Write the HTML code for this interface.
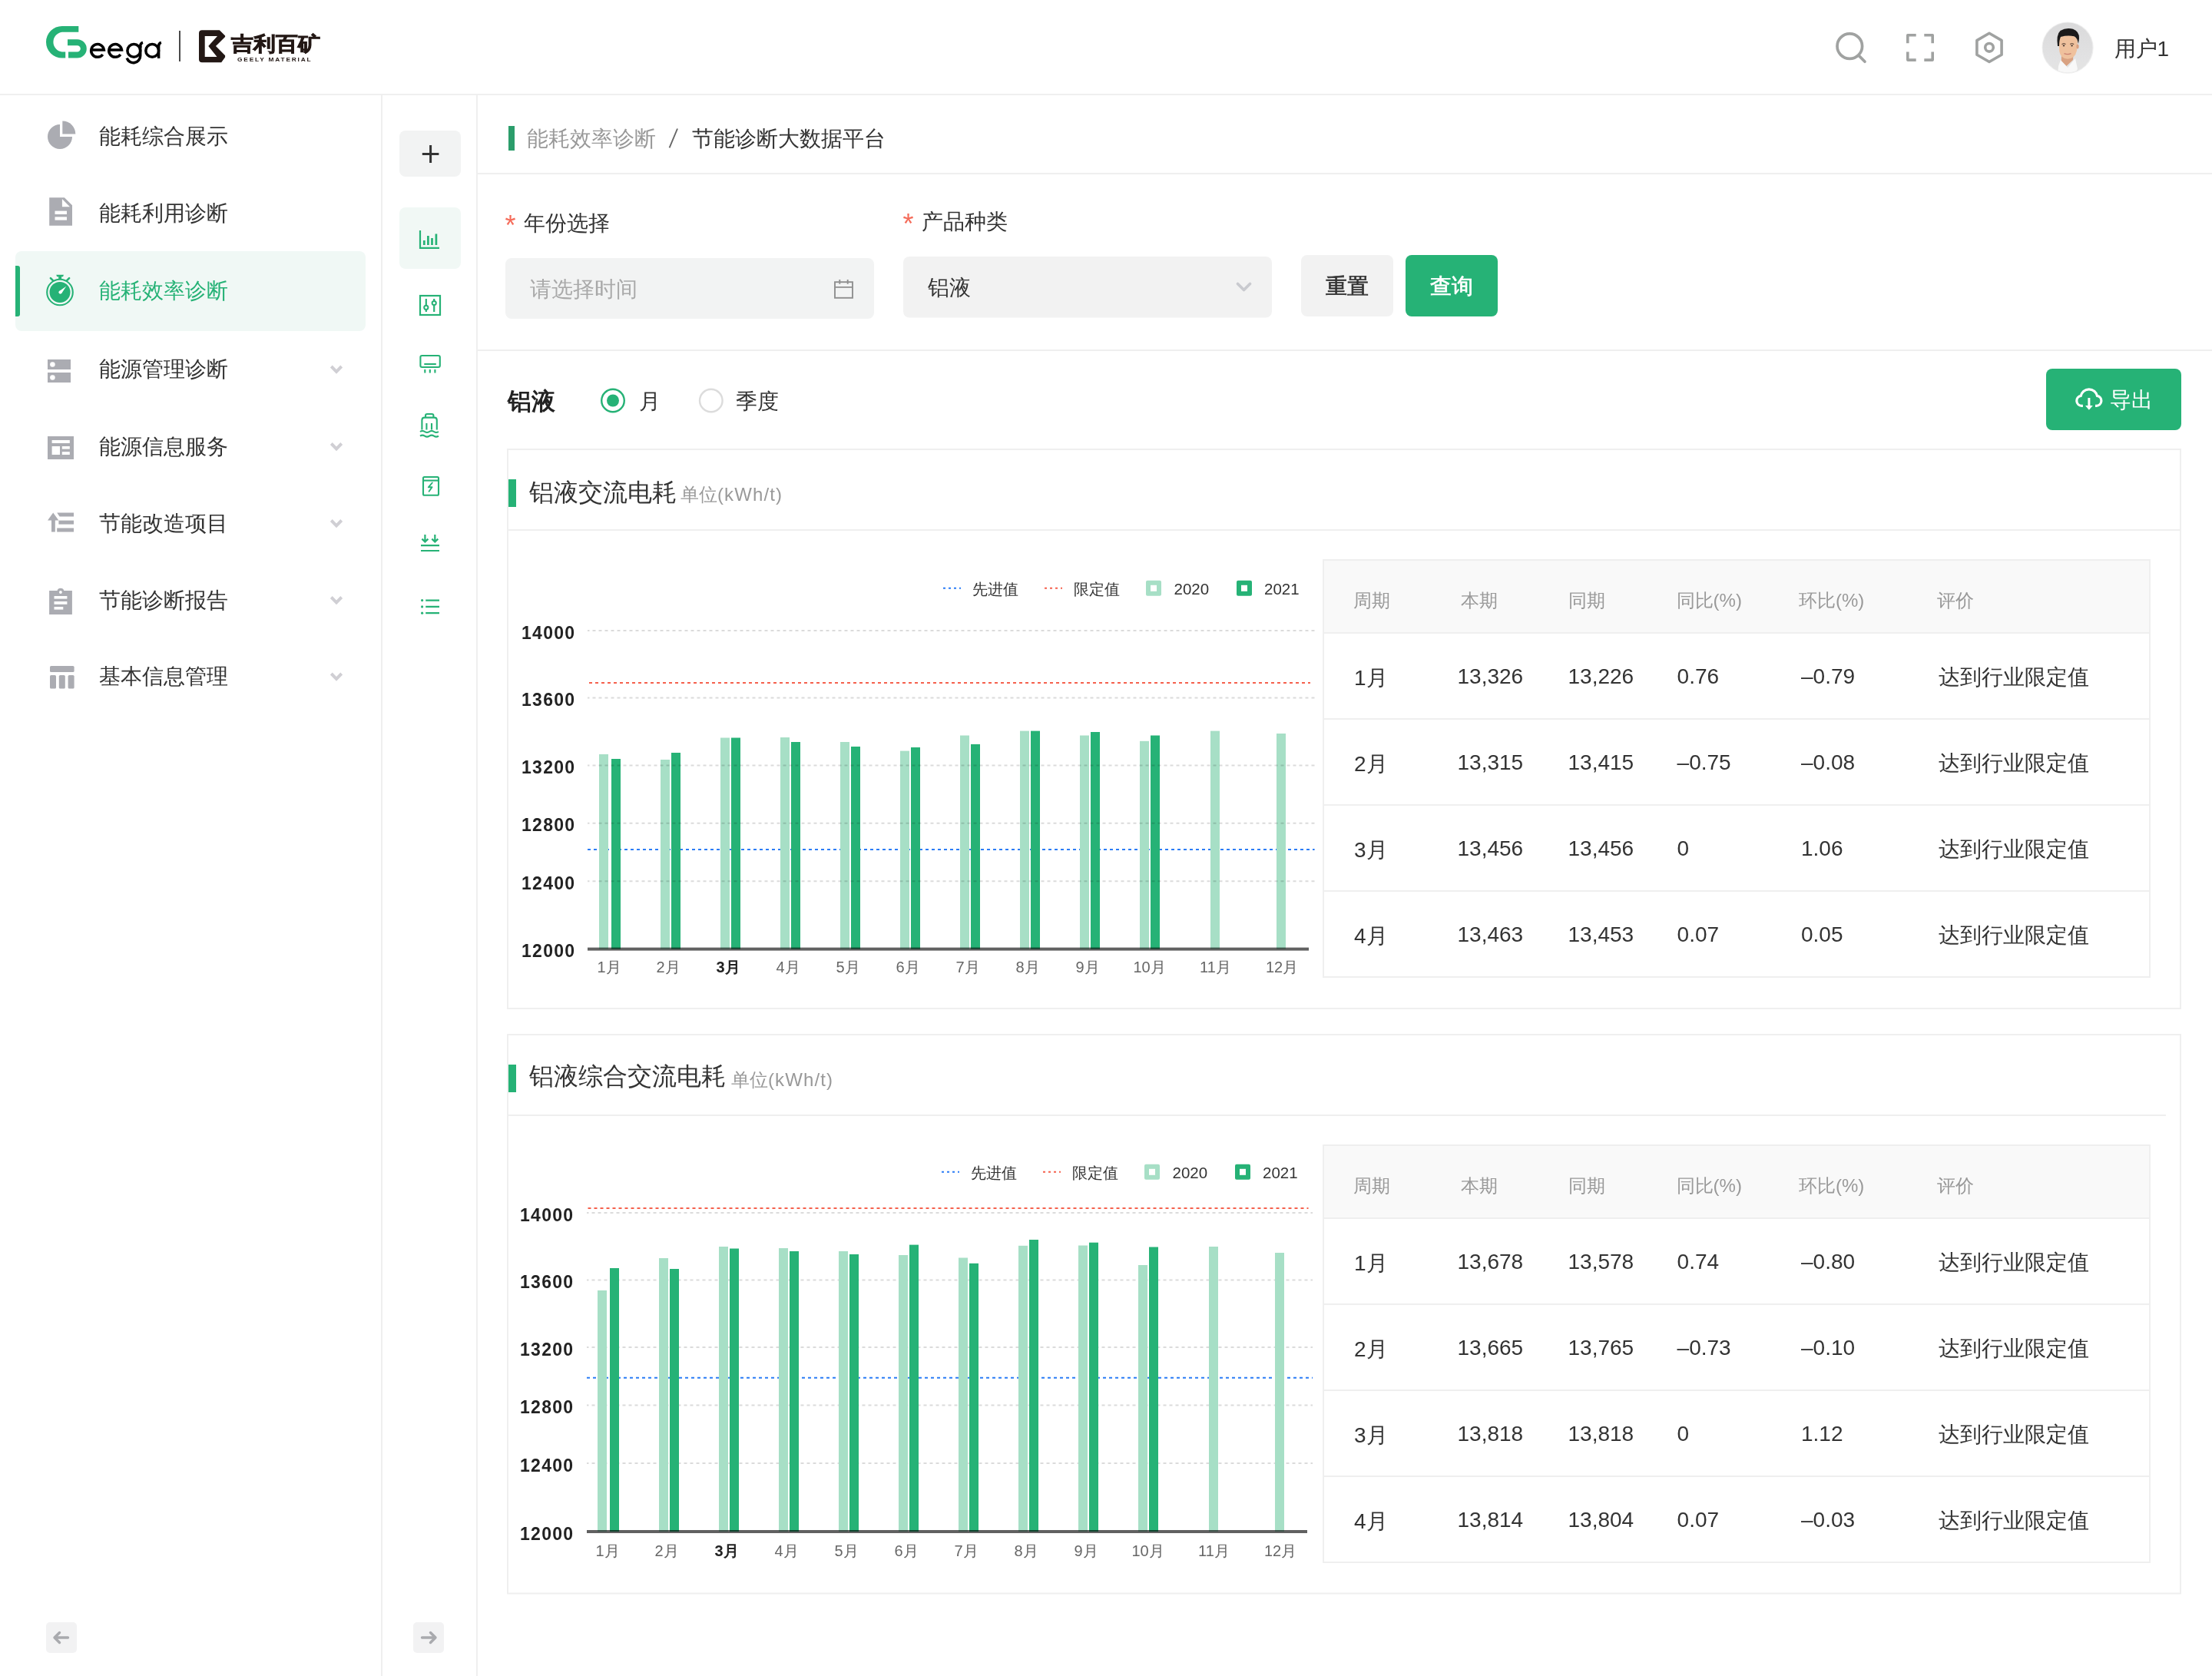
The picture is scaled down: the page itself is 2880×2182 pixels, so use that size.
<!DOCTYPE html>
<html><head><meta charset="utf-8"><title>节能诊断大数据平台</title>
<style>
html,body{margin:0;padding:0;background:#fff;}
body{width:2880px;height:2182px;position:relative;overflow:hidden;font-family:"Liberation Sans",sans-serif;}
svg.g{position:absolute;left:0;top:0;}
.t{position:absolute;white-space:nowrap;line-height:1;}
#tx{position:absolute;left:0;top:0;width:2880px;height:2182px;will-change:transform;}
</style></head><body>
<svg class="g" width="2880" height="2182" viewBox="0 0 2880 2182">
<rect x="0" y="122" width="2880" height="2" rx="0" fill="#efefef" />
<path d="M79,34 H102.3 V41.8 H80.8 A13,13 0 0 0 80.8,67.6 H85.2 V75.6 H80.8 A20.8,20.8 0 0 1 80.8,34 Z" fill="#26b276" stroke="none" stroke-width="0" />
<path d="M88,51.2 H100.6 A12.2,12.2 0 0 1 100.6,75.6 H89 V67.6 H100.6 A4.2,4.2 0 0 0 100.6,59.2 H88 Z" fill="#26b276" stroke="none" stroke-width="0" />
<g fill="none" stroke="#000" stroke-width="3.5"><path d="M118.8,64.9 H135.4 A8.4,8.4 0 1 0 133.8,71"/><path d="M141.9,64.9 H158.5 A8.4,8.4 0 1 0 156.9,71"/><circle cx="174.3" cy="65.9" r="8.4"/><path d="M182.7,60 V72.5 A9,9 0 0 1 165.2,75.6"/><path d="M182.7,62 V60 Q182.7,56.3 186,55.4"/><circle cx="198.2" cy="65.9" r="8.4"/><path d="M206.6,76 V60 Q206.6,56.3 209.9,55.4"/></g>
<rect x="233" y="40" width="2" height="40" rx="0" fill="#4a4a4a" />
<path d="M263,39.2 H285.8 L293.1,46.5 V48 L281,60.1 L293.1,72.3 V74.5 L288.2,81.3 H263 Q259,81.3 259,77.3 V43.2 Q259,39.2 263,39.2 Z M266.7,47.1 V74 H282.5 L271.3,60.1 L283,47.1 Z" fill="#231815" stroke="none" stroke-width="0" fill-rule="evenodd"/>
<g fill="none" stroke="#a0a2a1" stroke-width="3.7" stroke-linecap="round"><circle cx="2408.3" cy="60.1" r="16.3"/><path d="M2420.4,72.6 L2428,80.2"/></g>
<g fill="none" stroke="#a0a2a1" stroke-width="3.6" stroke-linejoin="round"><path d="M2494.7,45.7 H2483.8 V56.3"/><path d="M2505.3,45.7 H2516.2 V56.3"/><path d="M2483.8,67.6 V78.1 H2494.7"/><path d="M2516.2,67.6 V78.1 H2505.3"/></g>
<g fill="none" stroke="#a0a2a1" stroke-width="3.6" stroke-linejoin="round"><path d="M2590,43.3 L2606.1,52.6 V71.2 L2590,80.5 L2573.9,71.2 V52.6 Z"/><circle cx="2590" cy="61.8" r="5.3"/></g>
<defs><clipPath id="av"><circle cx="2692" cy="62" r="32.5"/></clipPath><linearGradient id="avg" x1="0" y1="0" x2="0" y2="1"><stop offset="0" stop-color="#d9d9da"/><stop offset="1" stop-color="#e6e6e7"/></linearGradient></defs>
<circle cx="2692.1" cy="62.1" r="33.6" fill="#eeeeee"/>
<g clip-path="url(#av)"><rect x="2655" y="25" width="75" height="75" fill="url(#avg)"/><path d="M2668,100 L2672,85 Q2679,80 2684,79 L2703,78 Q2714,81 2716,84 L2721,100 Z" fill="#e3e3e3"/><path d="M2679,100 L2680,86 L2683,78 L2692,88 L2702,76 L2705,90 L2698,100 Z" fill="#f8f8f8"/><path d="M2684,70 L2683.8,79 L2690.5,86 L2699,78 L2699.5,69 Z" fill="#d9a282"/><path d="M2680.5,53 Q2680.5,46 2692.5,46 Q2705,46 2704.8,54 L2704,66 Q2701.5,76.5 2692,76.8 Q2683,76.5 2681.3,67 Z" fill="#efc19d"/><ellipse cx="2705" cy="60.5" rx="1.6" ry="3" fill="#d9a080"/><path d="M2679,60 Q2677,45 2682.5,40 Q2690,35.5 2699,37.8 Q2707.5,41 2707,50 L2706,57 Q2704.5,49 2700.5,47.3 Q2692,45.5 2683,48 Q2681,52 2681,60 Z" fill="#1b1a1a"/><path d="M2684.5,57.5 Q2687,56.2 2689.5,57.4 M2695.2,57.4 Q2697.7,56.2 2700.2,57.5" stroke="#3a2a22" stroke-width="1" fill="none"/><ellipse cx="2687" cy="59.6" rx="1.3" ry="0.8" fill="#2a2020"/><ellipse cx="2697.6" cy="59.6" rx="1.3" ry="0.8" fill="#2a2020"/><path d="M2687.5,69.6 Q2692,71.6 2696.5,69.6" stroke="#c98070" stroke-width="1.2" fill="none"/></g>
<rect x="496" y="124" width="2" height="2058" rx="0" fill="#efefef" />
<rect x="620" y="124" width="2" height="2058" rx="0" fill="#efefef" />
<rect x="20" y="327" width="456" height="104" rx="8" fill="#f0f8f5" />
<path d="M20,346 H23 Q26,346 26,349 V409 Q26,412 23,412 H20 Z" fill="#26b276" stroke="none" stroke-width="0" />
<path d="M431.3,477 L438,483.8 L444.7,477" fill="none" stroke="#d0cfd4" stroke-width="4" stroke-linejoin="miter"/>
<path d="M431.3,577.5 L438,584.3 L444.7,577.5" fill="none" stroke="#d0cfd4" stroke-width="4" stroke-linejoin="miter"/>
<path d="M431.3,677.5 L438,684.3 L444.7,677.5" fill="none" stroke="#d0cfd4" stroke-width="4" stroke-linejoin="miter"/>
<path d="M431.3,777.5 L438,784.3 L444.7,777.5" fill="none" stroke="#d0cfd4" stroke-width="4" stroke-linejoin="miter"/>
<path d="M431.3,877 L438,883.8 L444.7,877" fill="none" stroke="#d0cfd4" stroke-width="4" stroke-linejoin="miter"/>
<path d="M78,178 V162 A16,16 0 1 0 94,178 Z" fill="#abacb2" stroke="none" stroke-width="0" />
<path d="M81.3,174.5 V157.5 A17,17 0 0 1 98.3,174.5 Z" fill="#abacb2" stroke="none" stroke-width="0" />
<path d="M64.2,257.2 H83.9 L94,267.3 V293.7 H64.2 Z M80.9,259 V269.3 H91 Z" fill="#abacb2" stroke="none" stroke-width="0" fill-rule="evenodd"/>
<rect x="71.5" y="274.6" width="15.5" height="4.4" rx="0" fill="#fff" />
<rect x="71.5" y="282.4" width="15.5" height="4.2" rx="0" fill="#fff" />
<g><circle cx="78" cy="380.5" r="16.8" fill="none" stroke="#26b276" stroke-width="2.1"/><circle cx="78" cy="380.4" r="13.5" fill="#26b276"/><path d="M73.2,357.8 H83 L82,360.2 H74.2 Z" fill="#26b276"/><rect x="76.2" y="359.5" width="3.9" height="4.5" fill="#26b276"/><path d="M65.9,362.2 L68.9,365.2 M90.1,362.2 L87.1,365.2" stroke="#26b276" stroke-width="2.6" stroke-linecap="round"/><path d="M76.9,379.2 L86.2,372.7 L80.1,382 Z" fill="#fff"/><circle cx="78.5" cy="380.6" r="2.1" fill="#fff"/></g>
<rect x="62" y="468" width="30" height="13" rx="0" fill="#abacb2" />
<rect x="62" y="485" width="30" height="13" rx="0" fill="#abacb2" />
<circle cx="68.4" cy="474.5" r="3.3" fill="#fff"/><circle cx="68.4" cy="491.5" r="3.3" fill="#fff"/>
<rect x="62" y="568" width="34" height="30" rx="0" fill="#abacb2" />
<rect x="67.6" y="573" width="23.2" height="4" rx="0" fill="#fff" />
<rect x="67.6" y="581" width="10.4" height="11" rx="0" fill="#fff" />
<rect x="80.8" y="581" width="10" height="3.6" rx="0" fill="#fff" />
<rect x="80.8" y="588.2" width="10" height="3.8" rx="0" fill="#fff" />
<path d="M62,677.6 L69.2,667.5 L76.4,677.6 H71.8 V692.5 H67 V677.6 Z" fill="#abacb2" stroke="none" stroke-width="0" />
<path d="M74.2,667.5 H96 V672.6 H77.6 Z" fill="#abacb2" stroke="none" stroke-width="0" />
<rect x="76.4" y="677.6" width="19.6" height="5" rx="0" fill="#abacb2" />
<rect x="74.2" y="687.5" width="21.8" height="5" rx="0" fill="#abacb2" />
<path d="M64.1,769 H74.5 A4.6,4.6 0 0 1 83.3,769 H93.9 V800 H64.1 Z" fill="#abacb2" stroke="none" stroke-width="0" />
<circle cx="78.9" cy="771" r="1.9" fill="#fff"/>
<rect x="70.5" y="776" width="16.9" height="3.6" rx="0" fill="#fff" />
<rect x="70.5" y="783" width="16.9" height="3.8" rx="0" fill="#fff" />
<rect x="70.5" y="790" width="11.8" height="3.6" rx="0" fill="#fff" />
<rect x="65" y="867" width="31.6" height="8" rx="1.6" fill="#abacb2" />
<rect x="65" y="879" width="8" height="17.6" rx="1.6" fill="#abacb2" />
<rect x="76.8" y="879" width="8" height="17.6" rx="1.6" fill="#abacb2" />
<rect x="88.6" y="879" width="8" height="17.6" rx="1.6" fill="#abacb2" />
<rect x="60" y="2112" width="40" height="40" rx="5" fill="#f2f2f3" />
<path d="M88.5,2132 H71 M77.5,2125.5 L71,2132 L77.5,2138.5" fill="none" stroke="#a9aaae" stroke-width="3.4" stroke-linecap="round" stroke-linejoin="round"/>
<rect x="538" y="2112" width="40" height="40" rx="5" fill="#f2f2f3" />
<path d="M549.5,2132 H567 M560.5,2125.5 L567,2132 L560.5,2138.5" fill="none" stroke="#a9aaae" stroke-width="3.4" stroke-linecap="round" stroke-linejoin="round"/>
<rect x="520" y="170" width="80" height="60" rx="8" fill="#f2f3f3" />
<path d="M549.8,200.5 H571.4 M560.6,189 V212" fill="none" stroke="#333" stroke-width="3" />
<rect x="520" y="270" width="80" height="80" rx="8" fill="#f1f8f5" />
<g fill="none" stroke="#26b276" stroke-width="2.2"><path d="M547,300 V322.8 H572"/><path d="M552.3,319 V313 M557.4,319 V307.1 M562.5,319 V310 M567.9,319 V304.6" stroke-width="2.7"/><rect x="547" y="385" width="26" height="25"/><path d="M554.8,389 V406 M565.2,389 V406"/></g>
<circle cx="554.8" cy="400.3" r="2.6" fill="#fff" stroke="#26b276" stroke-width="2"/><circle cx="565.2" cy="394.5" r="2.6" fill="#fff" stroke="#26b276" stroke-width="2"/>
<g fill="none" stroke="#26b276" stroke-width="2.1" stroke-linecap="butt"><rect x="547.4" y="463" width="25.4" height="15" rx="2"/><path d="M552.3,474 H567.8"/><path d="M553.3,481 V485.5 M559.8,481 V485.5 M566.4,481 V485.5"/><path d="M549.4,559.5 V547 Q549.4,543.6 552.8,543.6 H565.4 Q568.8,543.6 568.8,547 V559.5"/><path d="M554,543.6 V541.2 Q554,539 556.2,539 H562.2 Q564.4,539 564.4,541.2 V543.6"/><path d="M555.4,551 V559.5 M562,551 V559.5"/><path d="M547,562 Q550,560 553,562 T559,562 T565,562 T571,562"/><path d="M547,567.6 Q550,565.6 553,567.6 T559,567.6 T565,567.6 T571,567.6"/><rect x="551" y="621" width="20" height="23.8" rx="1.5"/><path d="M551,625.6 H571"/></g>
<path d="M562.8,628.5 L557.8,634.3 H562.5 L558.6,639.7" fill="none" stroke="#26b276" stroke-width="1.9" stroke-linejoin="round" stroke-linecap="round"/>
<g fill="none" stroke="#26b276" stroke-width="2.2"><path d="M548,710.2 H572 M548,717 H572"/><path d="M553.4,696 V705 M549.4,701.6 L553.4,705.4 L557.4,701.6 M566.3,696 V705 M562.3,701.6 L566.3,705.4 L570.3,701.6"/><path d="M554.2,781.6 H572 M554.2,789.9 H572 M554.2,798.2 H572"/></g>
<circle cx="549.6" cy="781.6" r="1.6" fill="#26b276"/><circle cx="549.6" cy="789.9" r="1.6" fill="#26b276"/><circle cx="549.6" cy="798.2" r="1.6" fill="#26b276"/>
<rect x="622" y="225" width="2258" height="2" rx="0" fill="#efefef" />
<rect x="662" y="164" width="8" height="32" rx="0" fill="#2b9d6b" />
<path d="M882,167.5 L871.6,192.3" fill="none" stroke="#666" stroke-width="1.9" />
<rect x="658" y="336" width="480" height="79" rx="8" fill="#f2f3f3" />
<g fill="none" stroke="#8f8f8f" stroke-width="1.9"><rect x="1087" y="367.2" width="23" height="20.6"/><path d="M1087,373.9 H1110 M1093.3,364 V369.7 M1103.7,364 V369.7"/></g>
<rect x="1176" y="334" width="480" height="79.5" rx="8" fill="#f2f2f2" />
<path d="M1611.5,369.5 L1619.5,377.5 L1627.5,369.5" fill="none" stroke="#c9cacf" stroke-width="3.8" stroke-linecap="round" stroke-linejoin="round"/>
<rect x="1694" y="332" width="120" height="80" rx="8" fill="#f2f2f2" />
<rect x="1830" y="332" width="120" height="80" rx="8" fill="#26b276" />
<rect x="622" y="455" width="2258" height="2" rx="0" fill="#efefef" />
<circle cx="798" cy="521.5" r="14.8" fill="#fff" stroke="#26b276" stroke-width="2.4"/><circle cx="798" cy="521.5" r="8" fill="#26b276"/>
<circle cx="925.8" cy="521.5" r="14.8" fill="#fff" stroke="#dcdcdc" stroke-width="2.4"/>
<rect x="2664" y="480" width="176" height="80" rx="8" fill="#26b276" />
<path d="M2711.9,528.3 H2710.3 A6.5,6.5 0 0 1 2709.2,515.4 A10.9,10.9 0 0 1 2730.5,515.4 A6.5,6.5 0 0 1 2729.4,528.3 H2728" fill="none" stroke="#fff" stroke-width="3.2" />
<path d="M2719.9,518 V528.5" fill="none" stroke="#fff" stroke-width="3" />
<path d="M2715,528 H2724.8 L2719.9,533.8 Z" fill="#fff" stroke="none" stroke-width="0" />
<rect x="661" y="585" width="2178" height="728" fill="none" stroke="#efefef" stroke-width="2"/>
<rect x="662" y="689" width="2177" height="2" rx="0" fill="#efefef" />
<rect x="662" y="624" width="10" height="36" rx="0" fill="#26b276" />
<rect x="661" y="1347" width="2178" height="727.5" fill="none" stroke="#efefef" stroke-width="2"/>
<rect x="662" y="1451" width="2158" height="2" rx="0" fill="#efefef" />
<rect x="662" y="1386" width="10" height="36" rx="0" fill="#26b276" />
<path d="M765,1106 H1711.6" stroke="#2b7cf6" stroke-width="2" stroke-dasharray="4 4"/>
<rect x="780" y="982" width="12" height="253.6" rx="0" fill="#a7dfc6" />
<rect x="860" y="989" width="12" height="246.6" rx="0" fill="#a7dfc6" />
<rect x="938" y="960.5" width="12" height="275.1" rx="0" fill="#a7dfc6" />
<rect x="1016" y="960" width="12" height="275.6" rx="0" fill="#a7dfc6" />
<rect x="1094" y="966" width="12" height="269.6" rx="0" fill="#a7dfc6" />
<rect x="1172" y="977.6" width="12" height="258.0" rx="0" fill="#a7dfc6" />
<rect x="1250" y="957.5" width="12" height="278.1" rx="0" fill="#a7dfc6" />
<rect x="1328" y="951.6" width="12" height="284.0" rx="0" fill="#a7dfc6" />
<rect x="1406" y="957.5" width="12" height="278.1" rx="0" fill="#a7dfc6" />
<rect x="1484" y="964.8" width="12" height="270.8" rx="0" fill="#a7dfc6" />
<rect x="1576" y="951.6" width="12" height="284.0" rx="0" fill="#a7dfc6" />
<rect x="1662" y="955" width="12" height="280.6" rx="0" fill="#a7dfc6" />
<rect x="796" y="988" width="12" height="247.6" rx="0" fill="#26b276" />
<rect x="874" y="980" width="12" height="255.6" rx="0" fill="#26b276" />
<rect x="952" y="960.5" width="12" height="275.1" rx="0" fill="#26b276" />
<rect x="1030" y="966" width="12" height="269.6" rx="0" fill="#26b276" />
<rect x="1108" y="972" width="12" height="263.6" rx="0" fill="#26b276" />
<rect x="1186" y="973" width="12" height="262.6" rx="0" fill="#26b276" />
<rect x="1264" y="968.9" width="12" height="266.7" rx="0" fill="#26b276" />
<rect x="1342" y="951.6" width="12" height="284.0" rx="0" fill="#26b276" />
<rect x="1420" y="953" width="12" height="282.6" rx="0" fill="#26b276" />
<rect x="1498" y="957.5" width="12" height="278.1" rx="0" fill="#26b276" />
<path d="M765,821 H1711.6" stroke="rgba(0,0,0,0.14)" stroke-width="2" stroke-dasharray="4 4" stroke-dashoffset="1.5"/>
<path d="M765,908.5 H1711.6" stroke="rgba(0,0,0,0.14)" stroke-width="2" stroke-dasharray="4 4" stroke-dashoffset="1.5"/>
<path d="M765,996.4 H1711.6" stroke="rgba(0,0,0,0.14)" stroke-width="2" stroke-dasharray="4 4" stroke-dashoffset="1.5"/>
<path d="M765,1071.8 H1711.6" stroke="rgba(0,0,0,0.14)" stroke-width="2" stroke-dasharray="4 4" stroke-dashoffset="1.5"/>
<path d="M765,1147.2 H1711.6" stroke="rgba(0,0,0,0.14)" stroke-width="2" stroke-dasharray="4 4" stroke-dashoffset="1.5"/>
<path d="M767,889 H1706" stroke="#f5614d" stroke-width="2" stroke-dasharray="4 4"/>
<rect x="765" y="1233.6" width="939" height="4" fill="rgba(0,0,0,0.62)"/>
<path d="M1228,765.8 H1251" stroke="#2b7cf6" stroke-width="2" stroke-dasharray="3 4"/>
<path d="M1360,765.8 H1383" stroke="#f5614d" stroke-width="2" stroke-dasharray="3 4"/>
<rect x="1492" y="755.8" width="20" height="20" rx="2" fill="#a7dfc6" />
<rect x="1498" y="761.8" width="8" height="8" rx="0" fill="#fff" />
<rect x="1610" y="755.8" width="20" height="20" rx="2" fill="#26b276" />
<rect x="1616" y="761.8" width="8" height="8" rx="0" fill="#fff" />
<path d="M764,1579 H1709" stroke="rgba(0,0,0,0.14)" stroke-width="2" stroke-dasharray="4 4" stroke-dashoffset="1.5"/>
<path d="M764,1666.6 H1709" stroke="rgba(0,0,0,0.14)" stroke-width="2" stroke-dasharray="4 4" stroke-dashoffset="1.5"/>
<path d="M764,1754 H1709" stroke="rgba(0,0,0,0.14)" stroke-width="2" stroke-dasharray="4 4" stroke-dashoffset="1.5"/>
<path d="M764,1829.6 H1709" stroke="rgba(0,0,0,0.14)" stroke-width="2" stroke-dasharray="4 4" stroke-dashoffset="1.5"/>
<path d="M764,1905 H1709" stroke="rgba(0,0,0,0.14)" stroke-width="2" stroke-dasharray="4 4" stroke-dashoffset="1.5"/>
<path d="M764,1793.7 H1709" stroke="#2b7cf6" stroke-width="2" stroke-dasharray="4 4"/>
<rect x="778" y="1680" width="12" height="314" rx="0" fill="#a7dfc6" />
<rect x="858" y="1638" width="12" height="356" rx="0" fill="#a7dfc6" />
<rect x="936" y="1623" width="12" height="371" rx="0" fill="#a7dfc6" />
<rect x="1014" y="1625" width="12" height="369" rx="0" fill="#a7dfc6" />
<rect x="1092" y="1629" width="12" height="365" rx="0" fill="#a7dfc6" />
<rect x="1170" y="1634" width="12" height="360" rx="0" fill="#a7dfc6" />
<rect x="1248" y="1637.5" width="12" height="356.5" rx="0" fill="#a7dfc6" />
<rect x="1326" y="1621.8" width="12" height="372.2" rx="0" fill="#a7dfc6" />
<rect x="1404" y="1621.5" width="12" height="372.5" rx="0" fill="#a7dfc6" />
<rect x="1482" y="1647" width="12" height="347" rx="0" fill="#a7dfc6" />
<rect x="1574" y="1623" width="12" height="371" rx="0" fill="#a7dfc6" />
<rect x="1660" y="1631" width="12" height="363" rx="0" fill="#a7dfc6" />
<rect x="794" y="1651" width="12" height="343" rx="0" fill="#26b276" />
<rect x="872" y="1652" width="12" height="342" rx="0" fill="#26b276" />
<rect x="950" y="1625.5" width="12" height="368.5" rx="0" fill="#26b276" />
<rect x="1028" y="1629" width="12" height="365" rx="0" fill="#26b276" />
<rect x="1106" y="1633" width="12" height="361" rx="0" fill="#26b276" />
<rect x="1184" y="1620.6" width="12" height="373.4" rx="0" fill="#26b276" />
<rect x="1262" y="1644.8" width="12" height="349.2" rx="0" fill="#26b276" />
<rect x="1340" y="1614" width="12" height="380" rx="0" fill="#26b276" />
<rect x="1418" y="1617.7" width="12" height="376.3" rx="0" fill="#26b276" />
<rect x="1496" y="1623.5" width="12" height="370.5" rx="0" fill="#26b276" />
<path d="M765.5,1573 H1703.5" stroke="#f5614d" stroke-width="2" stroke-dasharray="4 4"/>
<rect x="764" y="1992" width="938" height="4" fill="rgba(0,0,0,0.62)"/>
<path d="M1226,1525.8 H1249" stroke="#2b7cf6" stroke-width="2" stroke-dasharray="3 4"/>
<path d="M1358,1525.8 H1381" stroke="#f5614d" stroke-width="2" stroke-dasharray="3 4"/>
<rect x="1490" y="1515.8" width="20" height="20" rx="2" fill="#a7dfc6" />
<rect x="1496" y="1521.8" width="8" height="8" rx="0" fill="#fff" />
<rect x="1608" y="1515.8" width="20" height="20" rx="2" fill="#26b276" />
<rect x="1614" y="1521.8" width="8" height="8" rx="0" fill="#fff" />
<rect x="1723" y="729" width="1076" height="543" fill="#fff" stroke="#efefef" stroke-width="2"/>
<rect x="1724" y="730" width="1074" height="94" rx="0" fill="#f9f9f9" />
<rect x="1724" y="823" width="1074" height="2" rx="0" fill="#efefef" />
<rect x="1724" y="935" width="1074" height="2" rx="0" fill="#efefef" />
<rect x="1724" y="1047" width="1074" height="2" rx="0" fill="#efefef" />
<rect x="1724" y="1159" width="1074" height="2" rx="0" fill="#efefef" />
<rect x="1723" y="1491" width="1076" height="543" fill="#fff" stroke="#efefef" stroke-width="2"/>
<rect x="1724" y="1492" width="1074" height="94" rx="0" fill="#f9f9f9" />
<rect x="1724" y="1585" width="1074" height="2" rx="0" fill="#efefef" />
<rect x="1724" y="1697" width="1074" height="2" rx="0" fill="#efefef" />
<rect x="1724" y="1809" width="1074" height="2" rx="0" fill="#efefef" />
<rect x="1724" y="1921" width="1074" height="2" rx="0" fill="#efefef" />
</svg>
<div id="tx">
<div class="t" style="left:301px;top:44.2px;font-size:29px;line-height:1;color:#231815;font-weight:900;-webkit-text-stroke:0.9px #231815;transform:scaleY(0.9);transform-origin:0 0">吉利百矿</div>
<div class="t" style="left:309.3px;top:73.7px;font-size:8px;line-height:1;color:#231815;font-weight:bold;letter-spacing:1.75px;transform:scaleX(1.04);transform-origin:0 0">GEELY MATERIAL</div>
<div class="t" style="left:2752.5px;top:49.5px;font-size:28px;color:#333;font-weight:normal;">用户1</div>
<div class="t" style="left:128.5px;top:163.5px;font-size:28px;color:#333;font-weight:normal;">能耗综合展示</div>
<div class="t" style="left:128.5px;top:263.5px;font-size:28px;color:#333;font-weight:normal;">能耗利用诊断</div>
<div class="t" style="left:128.5px;top:364.8px;font-size:28px;color:#26b276;font-weight:normal;">能耗效率诊断</div>
<div class="t" style="left:128.5px;top:467.0px;font-size:28px;color:#333;font-weight:normal;">能源管理诊断</div>
<div class="t" style="left:128.5px;top:567.5px;font-size:28px;color:#333;font-weight:normal;">能源信息服务</div>
<div class="t" style="left:128.5px;top:667.5px;font-size:28px;color:#333;font-weight:normal;">节能改造项目</div>
<div class="t" style="left:128.5px;top:767.5px;font-size:28px;color:#333;font-weight:normal;">节能诊断报告</div>
<div class="t" style="left:128.5px;top:867.0px;font-size:28px;color:#333;font-weight:normal;">基本信息管理</div>
<div class="t" style="left:686.0px;top:167.0px;font-size:28px;color:#999;font-weight:normal;">能耗效率诊断</div>
<div class="t" style="left:900.7px;top:167.0px;font-size:28px;color:#333;font-weight:normal;">节能诊断大数据平台</div>
<div class="t" style="left:657.5px;top:276.0px;font-size:36px;color:#f56c5a;font-weight:normal;">*</div>
<div class="t" style="left:682.0px;top:277.0px;font-size:28px;color:#333;font-weight:normal;">年份选择</div>
<div class="t" style="left:1175.5px;top:274.0px;font-size:36px;color:#f56c5a;font-weight:normal;">*</div>
<div class="t" style="left:1200.0px;top:275.0px;font-size:28px;color:#333;font-weight:normal;">产品种类</div>
<div class="t" style="left:690.0px;top:363.0px;font-size:28px;color:#a9a9a9;font-weight:normal;">请选择时间</div>
<div class="t" style="left:1208.0px;top:360.5px;font-size:28px;color:#333;font-weight:normal;">铝液</div>
<div class="t" style="left:1726.0px;top:359.4px;font-size:28px;color:#333;font-weight:normal;-webkit-text-stroke:0.7px #333">重置</div>
<div class="t" style="left:1862.0px;top:359.4px;font-size:28px;color:#fff;font-weight:normal;-webkit-text-stroke:0.7px #fff">查询</div>
<div class="t" style="left:661.0px;top:507.0px;font-size:31px;color:#222;font-weight:bold;">铝液</div>
<div class="t" style="left:832.0px;top:509.0px;font-size:28px;color:#333;font-weight:normal;">月</div>
<div class="t" style="left:958.0px;top:509.0px;font-size:28px;color:#333;font-weight:normal;">季度</div>
<div class="t" style="left:2746.5px;top:507.0px;font-size:28px;color:#fff;font-weight:normal;">导出</div>
<div class="t" style="left:689.0px;top:625.0px;font-size:32px;color:#333;font-weight:normal;">铝液交流电耗</div>
<div class="t" style="left:886px;top:632px;font-size:24px;color:#999">单位<span style="letter-spacing:1.1px">(kWh/t)</span></div>
<div class="t" style="left:689.0px;top:1385.0px;font-size:32px;color:#333;font-weight:normal;">铝液综合交流电耗</div>
<div class="t" style="left:952px;top:1394px;font-size:24px;color:#999">单位<span style="letter-spacing:1.1px">(kWh/t)</span></div>
<div class="t" style="left:679.0px;top:812.5px;font-size:23px;color:#222;font-weight:bold;letter-spacing:1.3px">14000</div>
<div class="t" style="left:679.0px;top:900.0px;font-size:23px;color:#222;font-weight:bold;letter-spacing:1.3px">13600</div>
<div class="t" style="left:679.0px;top:987.9px;font-size:23px;color:#222;font-weight:bold;letter-spacing:1.3px">13200</div>
<div class="t" style="left:679.0px;top:1063.3px;font-size:23px;color:#222;font-weight:bold;letter-spacing:1.3px">12800</div>
<div class="t" style="left:679.0px;top:1138.7px;font-size:23px;color:#222;font-weight:bold;letter-spacing:1.3px">12400</div>
<div class="t" style="left:679.0px;top:1227.1px;font-size:23px;color:#222;font-weight:bold;letter-spacing:1.3px">12000</div>
<div class="t" style="left:777.5px;top:1248.6px;font-size:20px;color:#666;font-weight:normal;">1月</div>
<div class="t" style="left:854.5px;top:1248.6px;font-size:20px;color:#666;font-weight:normal;">2月</div>
<div class="t" style="left:932.5px;top:1248.6px;font-size:20px;color:#222;font-weight:bold;">3月</div>
<div class="t" style="left:1010.5px;top:1248.6px;font-size:20px;color:#666;font-weight:normal;">4月</div>
<div class="t" style="left:1088.5px;top:1248.6px;font-size:20px;color:#666;font-weight:normal;">5月</div>
<div class="t" style="left:1166.5px;top:1248.6px;font-size:20px;color:#666;font-weight:normal;">6月</div>
<div class="t" style="left:1244.5px;top:1248.6px;font-size:20px;color:#666;font-weight:normal;">7月</div>
<div class="t" style="left:1322.5px;top:1248.6px;font-size:20px;color:#666;font-weight:normal;">8月</div>
<div class="t" style="left:1400.5px;top:1248.6px;font-size:20px;color:#666;font-weight:normal;">9月</div>
<div class="t" style="left:1475.5px;top:1248.6px;font-size:20px;color:#666;font-weight:normal;">10月</div>
<div class="t" style="left:1562.0px;top:1248.6px;font-size:20px;color:#666;font-weight:normal;">11月</div>
<div class="t" style="left:1648.0px;top:1248.6px;font-size:20px;color:#666;font-weight:normal;">12月</div>
<div class="t" style="left:1265.6px;top:756.8px;font-size:20px;color:#333;font-weight:normal;">先进值</div>
<div class="t" style="left:1398.0px;top:756.8px;font-size:20px;color:#333;font-weight:normal;">限定值</div>
<div class="t" style="left:1528.5px;top:756.8px;font-size:20.5px;color:#333;font-weight:normal;">2020</div>
<div class="t" style="left:1646.0px;top:756.8px;font-size:20.5px;color:#333;font-weight:normal;">2021</div>
<div class="t" style="left:677.0px;top:1570.5px;font-size:23px;color:#222;font-weight:bold;letter-spacing:1.3px">14000</div>
<div class="t" style="left:677.0px;top:1658.1px;font-size:23px;color:#222;font-weight:bold;letter-spacing:1.3px">13600</div>
<div class="t" style="left:677.0px;top:1745.5px;font-size:23px;color:#222;font-weight:bold;letter-spacing:1.3px">13200</div>
<div class="t" style="left:677.0px;top:1821.1px;font-size:23px;color:#222;font-weight:bold;letter-spacing:1.3px">12800</div>
<div class="t" style="left:677.0px;top:1896.5px;font-size:23px;color:#222;font-weight:bold;letter-spacing:1.3px">12400</div>
<div class="t" style="left:677.0px;top:1985.5px;font-size:23px;color:#222;font-weight:bold;letter-spacing:1.3px">12000</div>
<div class="t" style="left:775.5px;top:2008.6px;font-size:20px;color:#666;font-weight:normal;">1月</div>
<div class="t" style="left:852.5px;top:2008.6px;font-size:20px;color:#666;font-weight:normal;">2月</div>
<div class="t" style="left:930.5px;top:2008.6px;font-size:20px;color:#222;font-weight:bold;">3月</div>
<div class="t" style="left:1008.5px;top:2008.6px;font-size:20px;color:#666;font-weight:normal;">4月</div>
<div class="t" style="left:1086.5px;top:2008.6px;font-size:20px;color:#666;font-weight:normal;">5月</div>
<div class="t" style="left:1164.5px;top:2008.6px;font-size:20px;color:#666;font-weight:normal;">6月</div>
<div class="t" style="left:1242.5px;top:2008.6px;font-size:20px;color:#666;font-weight:normal;">7月</div>
<div class="t" style="left:1320.5px;top:2008.6px;font-size:20px;color:#666;font-weight:normal;">8月</div>
<div class="t" style="left:1398.5px;top:2008.6px;font-size:20px;color:#666;font-weight:normal;">9月</div>
<div class="t" style="left:1473.5px;top:2008.6px;font-size:20px;color:#666;font-weight:normal;">10月</div>
<div class="t" style="left:1560.0px;top:2008.6px;font-size:20px;color:#666;font-weight:normal;">11月</div>
<div class="t" style="left:1646.0px;top:2008.6px;font-size:20px;color:#666;font-weight:normal;">12月</div>
<div class="t" style="left:1263.6px;top:1516.8px;font-size:20px;color:#333;font-weight:normal;">先进值</div>
<div class="t" style="left:1396.0px;top:1516.8px;font-size:20px;color:#333;font-weight:normal;">限定值</div>
<div class="t" style="left:1526.5px;top:1516.8px;font-size:20.5px;color:#333;font-weight:normal;">2020</div>
<div class="t" style="left:1644.0px;top:1516.8px;font-size:20.5px;color:#333;font-weight:normal;">2021</div>
<div class="t" style="left:1762.0px;top:769.5px;font-size:24px;color:#999;font-weight:normal;">周期</div>
<div class="t" style="left:1902.0px;top:769.5px;font-size:24px;color:#999;font-weight:normal;">本期</div>
<div class="t" style="left:2042.0px;top:769.5px;font-size:24px;color:#999;font-weight:normal;">同期</div>
<div class="t" style="left:2182.6px;top:769.5px;font-size:24px;color:#999;font-weight:normal;">同比(%)</div>
<div class="t" style="left:2342.0px;top:769.5px;font-size:24px;color:#999;font-weight:normal;">环比(%)</div>
<div class="t" style="left:2521.7px;top:769.5px;font-size:24px;color:#999;font-weight:normal;">评价</div>
<div class="t" style="left:1763.0px;top:869.2px;font-size:28px;color:#333;font-weight:normal;">1月</div>
<div class="t" style="left:1897.5px;top:867.0px;font-size:28px;color:#333;font-weight:normal;">13,326</div>
<div class="t" style="left:2041.5px;top:867.0px;font-size:28px;color:#333;font-weight:normal;">13,226</div>
<div class="t" style="left:2183.6px;top:867.0px;font-size:28px;color:#333;font-weight:normal;">0.76</div>
<div class="t" style="left:2345.0px;top:867.0px;font-size:28px;color:#333;font-weight:normal;">–0.79</div>
<div class="t" style="left:2524.0px;top:868.4px;font-size:28px;color:#333;font-weight:normal;">达到行业限定值</div>
<div class="t" style="left:1763.0px;top:981.2px;font-size:28px;color:#333;font-weight:normal;">2月</div>
<div class="t" style="left:1897.5px;top:979.0px;font-size:28px;color:#333;font-weight:normal;">13,315</div>
<div class="t" style="left:2041.5px;top:979.0px;font-size:28px;color:#333;font-weight:normal;">13,415</div>
<div class="t" style="left:2183.6px;top:979.0px;font-size:28px;color:#333;font-weight:normal;">–0.75</div>
<div class="t" style="left:2345.0px;top:979.0px;font-size:28px;color:#333;font-weight:normal;">–0.08</div>
<div class="t" style="left:2524.0px;top:980.4px;font-size:28px;color:#333;font-weight:normal;">达到行业限定值</div>
<div class="t" style="left:1763.0px;top:1093.2px;font-size:28px;color:#333;font-weight:normal;">3月</div>
<div class="t" style="left:1897.5px;top:1091.0px;font-size:28px;color:#333;font-weight:normal;">13,456</div>
<div class="t" style="left:2041.5px;top:1091.0px;font-size:28px;color:#333;font-weight:normal;">13,456</div>
<div class="t" style="left:2183.6px;top:1091.0px;font-size:28px;color:#333;font-weight:normal;">0</div>
<div class="t" style="left:2345.0px;top:1091.0px;font-size:28px;color:#333;font-weight:normal;">1.06</div>
<div class="t" style="left:2524.0px;top:1092.4px;font-size:28px;color:#333;font-weight:normal;">达到行业限定值</div>
<div class="t" style="left:1763.0px;top:1205.2px;font-size:28px;color:#333;font-weight:normal;">4月</div>
<div class="t" style="left:1897.5px;top:1203.0px;font-size:28px;color:#333;font-weight:normal;">13,463</div>
<div class="t" style="left:2041.5px;top:1203.0px;font-size:28px;color:#333;font-weight:normal;">13,453</div>
<div class="t" style="left:2183.6px;top:1203.0px;font-size:28px;color:#333;font-weight:normal;">0.07</div>
<div class="t" style="left:2345.0px;top:1203.0px;font-size:28px;color:#333;font-weight:normal;">0.05</div>
<div class="t" style="left:2524.0px;top:1204.4px;font-size:28px;color:#333;font-weight:normal;">达到行业限定值</div>
<div class="t" style="left:1762.0px;top:1531.5px;font-size:24px;color:#999;font-weight:normal;">周期</div>
<div class="t" style="left:1902.0px;top:1531.5px;font-size:24px;color:#999;font-weight:normal;">本期</div>
<div class="t" style="left:2042.0px;top:1531.5px;font-size:24px;color:#999;font-weight:normal;">同期</div>
<div class="t" style="left:2182.6px;top:1531.5px;font-size:24px;color:#999;font-weight:normal;">同比(%)</div>
<div class="t" style="left:2342.0px;top:1531.5px;font-size:24px;color:#999;font-weight:normal;">环比(%)</div>
<div class="t" style="left:2521.7px;top:1531.5px;font-size:24px;color:#999;font-weight:normal;">评价</div>
<div class="t" style="left:1763.0px;top:1631.2px;font-size:28px;color:#333;font-weight:normal;">1月</div>
<div class="t" style="left:1897.5px;top:1629.0px;font-size:28px;color:#333;font-weight:normal;">13,678</div>
<div class="t" style="left:2041.5px;top:1629.0px;font-size:28px;color:#333;font-weight:normal;">13,578</div>
<div class="t" style="left:2183.6px;top:1629.0px;font-size:28px;color:#333;font-weight:normal;">0.74</div>
<div class="t" style="left:2345.0px;top:1629.0px;font-size:28px;color:#333;font-weight:normal;">–0.80</div>
<div class="t" style="left:2524.0px;top:1630.4px;font-size:28px;color:#333;font-weight:normal;">达到行业限定值</div>
<div class="t" style="left:1763.0px;top:1743.2px;font-size:28px;color:#333;font-weight:normal;">2月</div>
<div class="t" style="left:1897.5px;top:1741.0px;font-size:28px;color:#333;font-weight:normal;">13,665</div>
<div class="t" style="left:2041.5px;top:1741.0px;font-size:28px;color:#333;font-weight:normal;">13,765</div>
<div class="t" style="left:2183.6px;top:1741.0px;font-size:28px;color:#333;font-weight:normal;">–0.73</div>
<div class="t" style="left:2345.0px;top:1741.0px;font-size:28px;color:#333;font-weight:normal;">–0.10</div>
<div class="t" style="left:2524.0px;top:1742.4px;font-size:28px;color:#333;font-weight:normal;">达到行业限定值</div>
<div class="t" style="left:1763.0px;top:1855.2px;font-size:28px;color:#333;font-weight:normal;">3月</div>
<div class="t" style="left:1897.5px;top:1853.0px;font-size:28px;color:#333;font-weight:normal;">13,818</div>
<div class="t" style="left:2041.5px;top:1853.0px;font-size:28px;color:#333;font-weight:normal;">13,818</div>
<div class="t" style="left:2183.6px;top:1853.0px;font-size:28px;color:#333;font-weight:normal;">0</div>
<div class="t" style="left:2345.0px;top:1853.0px;font-size:28px;color:#333;font-weight:normal;">1.12</div>
<div class="t" style="left:2524.0px;top:1854.4px;font-size:28px;color:#333;font-weight:normal;">达到行业限定值</div>
<div class="t" style="left:1763.0px;top:1967.2px;font-size:28px;color:#333;font-weight:normal;">4月</div>
<div class="t" style="left:1897.5px;top:1965.0px;font-size:28px;color:#333;font-weight:normal;">13,814</div>
<div class="t" style="left:2041.5px;top:1965.0px;font-size:28px;color:#333;font-weight:normal;">13,804</div>
<div class="t" style="left:2183.6px;top:1965.0px;font-size:28px;color:#333;font-weight:normal;">0.07</div>
<div class="t" style="left:2345.0px;top:1965.0px;font-size:28px;color:#333;font-weight:normal;">–0.03</div>
<div class="t" style="left:2524.0px;top:1966.4px;font-size:28px;color:#333;font-weight:normal;">达到行业限定值</div>
</div>
</body></html>
